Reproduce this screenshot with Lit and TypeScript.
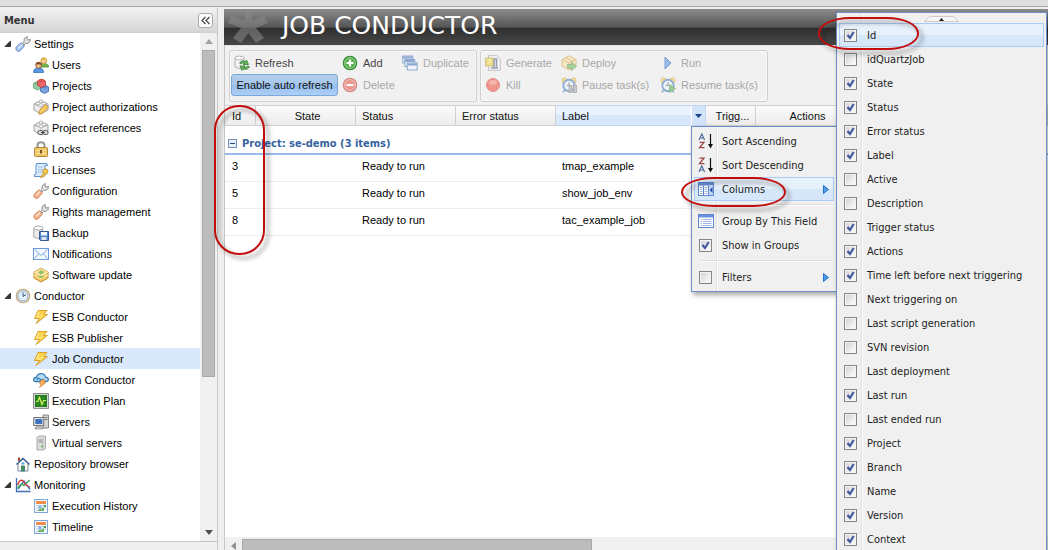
import { LitElement, html, svg, css, nothing, TemplateResult } from "lit";
import { customElement, property } from "lit/decorators.js";
import { classMap } from "lit/directives/class-map.js";

const wrench = (fill: string, line: string) => svg`
  <path d="M1 13.5 Q.5 11.5 2.500 9.700 L6.300 6.700 L9.500 9.800 L6.200 13.700 Q4.500 15.900 2.500 15.300 Z" fill=${fill} stroke=${line}/>
  <path d="M3 12.500 L7 8.500" stroke="#fff" stroke-opacity=".6" stroke-width="1.500"/>
  <path d="M7.500 7.500 L9 6 Q8.500 2.500 10.500 1.300 Q11.500 .6 12.500 .8 L11.800 3 L13 4.200 L15.400 3.300 Q15.600 5.500 14 6.700 Q12.500 7.800 10.500 7.300 L9 9 Z" fill="#e3e3e3" stroke="#8b8b8b"/>`;

const brick = (x: number, y: number, c: string, d: string) => svg`
  <path d="M${x} ${y + 2} l4 -2 4 2 v4.500 l-4 2 -4 -2 z" fill=${c} stroke=${d} stroke-width=".8"/>
  <ellipse cx=${x + 2.6} cy=${y + 1.600} rx="1.400" ry="1" fill=${c} stroke=${d} stroke-width=".6"/>
  <ellipse cx=${x + 5.4} cy=${y + 1.600} rx="1.400" ry="1" fill=${c} stroke=${d} stroke-width=".6"/>`;

const greyBrick = svg`
  <path d="M1 5 L8 2 L15 5 V11 L8 15 L1 11 Z" fill="#ededed" stroke="#999" stroke-width=".9"/>
  <path d="M1 5 L8 8 L15 5 M8 8 V15" fill="none" stroke="#b5b5b5" stroke-width=".9"/>
  <ellipse cx="5" cy="4.500" rx="2" ry="1.500" fill="#fff" stroke="#999" stroke-width=".8"/>
  <ellipse cx="11" cy="4.500" rx="2" ry="1.500" fill="#fff" stroke="#999" stroke-width=".8"/>
  <ellipse cx="8" cy="2.500" rx="2" ry="1.400" fill="#fff" stroke="#999" stroke-width=".8"/>`;

const bolt = svg`<path d="M5 1.500 H14 L10.500 5.500 H14.500 L3 14.500 L6.500 9.500 H1.500 Z" fill="#fbd44c" stroke="#d9a02b" stroke-linejoin="round"/><path d="M5.800 2.800 L3.800 8 H8 L10 5" fill="none" stroke="#fff1a8"/>`;

const calendar = svg`
  <rect x="1.500" y="1.500" width="13" height="13" fill="#f7fbff" stroke="#7fa6d6"/>
  <rect x="3" y="3" width="10" height="3" fill="#ef8b4c"/>
  <path d="M3 7.500 H13 M3 10 H13 M3 12.500 H9 M5.500 7 V13 M8 7 V13 M10.500 7 V11" stroke="#a9c3e2" stroke-width=".8"/>
  <rect x="6" y="8" width="2" height="2" fill="#7aa7dd"/><rect x="11" y="7" width="2" height="2" fill="#47a047"/>
  <path d="M8.500 10 h2.500 v3 h-2.500 z M6 11 h2 v2 h-2z" fill="#5bb053"/>`;

const alarm = svg`
  <circle cx="3.500" cy="3.500" r="2.700" fill="#f6cf5c" stroke="#cf9d2a" stroke-width=".8"/>
  <circle cx="12.500" cy="3.500" r="2.700" fill="#f6cf5c" stroke="#cf9d2a" stroke-width=".8"/>
  <path d="M3.500 13 L2 15.500 M12 13 L14 15.500" stroke="#5b7fae" stroke-width="1.500"/>
  <circle cx="8" cy="8.500" r="5.700" fill="#eef5fd" stroke="#3f76b8" stroke-width="1.900"/>
  <path d="M8 5 V9 L5.500 8" fill="none" stroke="#456"/>`;

const sheet = svg`
  <rect x=".5" y="1.500" width="15" height="13" fill="#fff" stroke="#5f86d0"/>
  <rect x="1" y="2" width="14" height="2.500" fill="#6a93de"/>`;

const icons: Record<string, TemplateResult> = {
  settings: wrench("#a9c6f2", "#6587c9"),
  config: wrench("#f7b48c", "#d98053"),
  users: svg`
    <path d="M6 10 Q6 6.500 10.500 6.500 Q15.500 6.500 15.500 10 Z" fill="#79b84a" stroke="#4d8a2a" stroke-width=".8"/>
    <circle cx="10.800" cy="3.800" r="2.900" fill="#f6cf9a" stroke="#b98a3a" stroke-width=".8"/>
    <path d="M8 3.500 Q8 .5 11 .6 Q14 .7 13.800 3.700 Q11 1.900 8 3.500" fill="#dfb53a"/>
    <path d="M.6 15.400 Q.6 11 5.500 11 Q10.500 11 10.500 15.400 Z" fill="#5b9be6" stroke="#2c66b5" stroke-width=".8"/>
    <circle cx="5.600" cy="8.300" r="2.900" fill="#f3c08c" stroke="#7b4a22" stroke-width=".8"/>
    <path d="M2.600 8 Q2.600 5 5.700 5.100 Q8.800 5.200 8.500 8.200 Q5.500 6.500 2.600 8" fill="#8a4b22"/>`,
  projects: svg`${brick(0.5, 3.5, "#93cda3", "#5a9d6d")}${brick(7.5, 7, "#77a3dc", "#3f69a8")}${brick(4.5, 1, "#ee6666", "#c53a3a")}`,
  auth: svg`${greyBrick}<path d="M6.500 11.500 L12.500 5.500 L15.300 8.300 L9.500 14.300 L6 15.200 Z" fill="#f8cb61" stroke="#c78a2b" stroke-width=".9"/>`,
  refs: svg`${greyBrick}<rect x="5" y="10.500" width="5" height="4" rx="1.500" fill="#ddd" stroke="#555"/><rect x="10" y="10.500" width="5" height="4" rx="1.500" fill="#ddd" stroke="#555"/><path d="M8 12.500 H12" stroke="#444"/>`,
  lock: svg`<path d="M4.500 7 V4.500 Q4.500 1.200 8 1.200 Q11.500 1.200 11.500 4.500 V7" fill="none" stroke="#989898" stroke-width="2"/>
    <rect x="1.500" y="6.500" width="13" height="9" rx="1" fill="#f1c765" stroke="#b3873a"/><path d="M3 9.500 H13 M3 12.500 H13" stroke="#fae6ab"/><path d="M8 9 V12.500" stroke="#77561b" stroke-width="2"/>`,
  license: svg`<path d="M3.500 1.500 H13 Q14.500 1.500 14.500 3.500 H12 V13 Q12 14.500 10 14.500 H1.500 Q.7 12 3 12 V4 Q3 1.500 5 1.500" fill="#d8eafb" stroke="#5d92cf"/>
    <path d="M5 5 H10 M5 7.500 H10 M5 10 H9" stroke="#a4c6ea"/><circle cx="12.300" cy="9.500" r="2.600" fill="#f7cc57" stroke="#c58f2a" stroke-width=".9"/><path d="M11 11.500 L7 15.200 L9.500 15.300 L13 12" fill="#f7cc57" stroke="#c58f2a" stroke-width=".8"/>`,
  backup: svg`<path d="M.8 3 V12 Q4 14.500 9.500 13 V3" fill="#ececec" stroke="#a5a5a5"/><ellipse cx="5.500" cy="3" rx="4.700" ry="2" fill="#fff" stroke="#a5a5a5"/>
    <path d="M6.500 6.500 H15.500 V15.500 H7.500 L6.500 14.500 Z" fill="#5584cf" stroke="#33589b"/><rect x="8" y="7" width="6" height="3.500" fill="#f3f7fd"/><rect x="8.500" y="12" width="5" height="3" fill="#dfe7f5"/>`,
  mail: svg`<rect x=".5" y="2.500" width="15" height="11" fill="#f2f8ff" stroke="#6a9bd8"/><path d="M1.500 3.500 L8 9.500 L14.500 3.500 M1.500 12.500 L5.800 7.800 M14.500 12.500 L10.200 7.800" fill="none" stroke="#7fabe0"/>`,
  update: svg`<path d="M1 5 L8 1.200 L15 5 V11 L8 15 L1 11 Z" fill="#f5ca62" stroke="#bd8b2c"/><path d="M1 5 L8 8.500 L15 5 L8 1.200 Z" fill="#fae39b"/><path d="M1 5 L8 8.500 L15 5 M1 8 L8 11.500 L15 8" fill="none" stroke="#fff3c9"/><path d="M5 5.500 L8 3 L11.500 5 L8 8 Z M4 9 L8 11.500 L12 9" fill="#75b756" fill-opacity=".75"/>`,
  clock: svg`<circle cx="8" cy="8" r="6.600" fill="#e9f2fc" stroke="#c4a777" stroke-width="1.400"/><circle cx="8" cy="8" r="4.900" fill="none" stroke="#86a9d3" stroke-width=".9"/><path d="M8 4.500 V8.500 L11 6.500" fill="none" stroke="#36587f"/>`,
  bolt,
  storm: svg`<path d="M3 9.500 Q.5 9.500 .7 7.300 Q1 5.300 3.500 5.500 Q4.500 1.500 8.500 1.700 Q12 2 12.500 5.300 Q15.500 5.500 15.300 7.800 Q15 9.800 12 9.500 Z" fill="#b8dcf4" stroke="#2e78b5" stroke-width="1.300"/><path d="M4 8 Q5 5 7.500 7.500 Q9 9 10.500 7" fill="none" stroke="#2e78b5" stroke-width="1.300"/><path d="M8.500 8 H12.500 L10.500 11 H12.500 L6.500 15.500 L8.500 12 H6.500 Z" fill="#fbb25c" stroke="#dc7d2d" stroke-width=".7"/>`,
  plan: svg`<rect x=".7" y=".7" width="14.600" height="14.600" fill="#eee" stroke="#777"/><rect x="2" y="2" width="12" height="12" fill="#1c7a1c"/><path d="M5 2 V14 M8 2 V14 M11 2 V14 M2 5 H14 M2 8 H14 M2 11 H14" stroke="#3f9d2e" stroke-width=".7"/><path d="M3 9 L5 8 L6.500 4.500 L9 11.500 L10.500 7.500 H13" fill="none" stroke="#d6f05e" stroke-width="1.200"/>`,
  servers: svg`<path d="M10 1 H15.500 V14 H10 Z" fill="#d4d4d4" stroke="#888"/><path d="M11.500 3.500 H14.500 M11.500 5.500 H14.500" stroke="#777"/><rect x=".7" y="3.500" width="10" height="8" fill="#e4e4e4" stroke="#777"/><rect x="2.300" y="5" width="7" height="5" fill="#3f73bf"/><path d="M3.500 12 H8 V13.500 H10 V15 H2 V13.500 H3.500 Z" fill="#c4c4c4" stroke="#888" stroke-width=".6"/>`,
  virtual: svg`<path d="M4 2.500 L6 1 H12.500 V13.500 L10.500 15 H4 Z" fill="#dedede" stroke="#a8a8a8"/><path d="M10 3 V15" stroke="#bbb"/><path d="M5.500 5 H9.500 M5.500 7 H9.500" stroke="#888"/><circle cx="9" cy="11.500" r=".9" fill="#52a452"/>`,
  home: svg`<path d="M3 7.500 V15 H13 V7.500" fill="#fffbe8" stroke="#7389a8"/><path d="M1.500 8.500 L8 2.500 L14.500 8.500" fill="none" stroke="#34588c" stroke-width="1.500"/><path d="M4 1.500 V5" stroke="#b04a32" stroke-width="2"/><rect x="6.500" y="10" width="3" height="5" fill="#3e9b46" stroke="#285f8a" stroke-width=".7"/><rect x="6.500" y="6.500" width="3" height="2" fill="#56a6e5"/>`,
  chart: svg`<path d="M1.500 1 V14.500 H15.500" fill="none" stroke="#3e70b5" stroke-width="1.300"/><path d="M3 12 L9 4 L15 12.500" fill="none" stroke="#3d7fd2" stroke-width="1.400"/><path d="M2.500 11.500 Q6 5 9 8.500 L14.500 3" fill="none" stroke="#3fa758" stroke-width="1.400"/><path d="M2.500 8 Q5 1 8.500 4.500 Q11 9 15 10" fill="none" stroke="#d83a3a" stroke-width="1.500"/>`,
  calendar,
  refresh: svg`<path d="M1 3 V12 Q4 14.500 10 13 V3" fill="#f1f1f1" stroke="#b0b0b0"/><ellipse cx="5.500" cy="3" rx="4.500" ry="1.900" fill="#fff" stroke="#b0b0b0"/><path d="M5.500 8 Q8 4.500 11.500 6.500 L12.500 5 L14.500 9.500 H9.500 L10.500 8 Q8.500 7 7 9 Z" fill="#66b85a" stroke="#347d34" stroke-width=".8"/><path d="M15.500 12 Q13 15.500 9 14 L8 15.500 L6 11 H11 L10 12.500 Q12 13 13.500 11 Z" fill="#66b85a" stroke="#347d34" stroke-width=".8"/>`,
  add: svg`<circle cx="8" cy="8" r="6.700" fill="#56b04f" stroke="#37893a" stroke-width="1.100"/><circle cx="8" cy="8" r="5.400" fill="none" stroke="#a5d8a0" stroke-width=".8"/><path d="M8 4.500 V11.500 M4.500 8 H11.500" stroke="#fff" stroke-width="2.200"/>`,
  remove: svg`<circle cx="8" cy="8" r="6.700" fill="#e64a3c" stroke="#bd2f28" stroke-width="1.100"/><circle cx="8" cy="8" r="5.400" fill="none" stroke="#f6b0a8" stroke-width=".8"/><path d="M4.500 8 H11.500" stroke="#fff" stroke-width="2.200"/>`,
  duplicate: svg`<rect x=".7" y="1" width="10" height="7" fill="#eef5fc" stroke="#3a6db6"/><path d="M1 2.500 H10.500" stroke="#3a6db6" stroke-width="2"/><rect x="2.800" y="4.500" width="10" height="7" fill="#eef5fc" stroke="#3a6db6"/><path d="M3 6 H12.500" stroke="#3a6db6" stroke-width="2"/><rect x="5.200" y="8" width="10" height="7" fill="#eef5fc" stroke="#3a6db6"/><path d="M5.500 9.500 H15" stroke="#3a6db6" stroke-width="2"/>`,
  generate: svg`<path d="M3.500 .7 H12 L15.300 4 V15.300 H3.500 Z" fill="#fafafa" stroke="#999"/><path d="M8.500 4 H11.500 V12 M6 13 H13 M9 4 V13" stroke="#44597c" stroke-width="1.600" fill="none"/><rect x=".7" y="3" width="7.300" height="8" fill="#e8cf2d" stroke="#a38d1a" stroke-width=".8"/><path d="M3 5 H7 M3 7.500 H6" stroke="#fff6a0"/>`,
  kill: svg`<circle cx="8" cy="8" r="6.500" fill="#f0493c" stroke="#d0392f"/><ellipse cx="8" cy="5.500" rx="4" ry="2.500" fill="#ff9b8c" fill-opacity=".7"/>`,
  deploy: svg`<path d="M1 4.500 L8 .8 L15 4.500 V11 L8 15 L1 11 Z" fill="#fbe3ab" stroke="#d19a35"/><path d="M1 4.500 L8 8 L15 4.500 M8 8 V15 M4.500 2.700 L11.500 6.200" fill="none" stroke="#d19a35"/><path d="M6.500 9.500 H10.500 V7 L15.500 11.300 L10.500 15.500 V13 H6.500 Z" fill="#6cba50" stroke="#35832e" stroke-width=".8"/>`,
  run: svg`<path d="M5 2 L11 8 L5 14 Z" fill="#4a94e8" stroke="#1f5cb8"/>`,
  pause: svg`${alarm}<rect x="8" y="8.500" width="3" height="7" fill="#aaa" stroke="#666" stroke-width=".7"/><rect x="12.500" y="8.500" width="3" height="7" fill="#aaa" stroke="#666" stroke-width=".7"/>`,
  resume: svg`${alarm}<path d="M9.500 7.500 L15.500 11.500 L9.500 15.500 Z" fill="#54b04c" stroke="#2e8030" stroke-width=".8"/>`,
  asc: svg`<path d="M1 7 L3.800 .8 L6.600 7 M2 5 H5.600" fill="none" stroke="#4a679e" stroke-width="1.100"/><path d="M1.500 9.300 H6 L1.500 14.700 H6.500" fill="none" stroke="#a04444" stroke-width="1.300"/><path d="M12.500 1 V13" stroke="#111" stroke-width="1.200"/><path d="M10 11 H15 L12.500 15.500 Z" fill="#111"/>`,
  desc: svg`<path d="M1.500 1.200 H6 L1.500 6.600 H6.500" fill="none" stroke="#a04444" stroke-width="1.300"/><path d="M1 15 L3.800 8.800 L6.600 15 M2 13 H5.600" fill="none" stroke="#4a679e" stroke-width="1.100"/><path d="M12.500 1 V13" stroke="#111" stroke-width="1.200"/><path d="M10 11 H15 L12.500 15.500 Z" fill="#111"/>`,
  columns: svg`${sheet}<path d="M5.500 4.500 V14 M10.500 4.500 V14" stroke="#5f86d0"/><path d="M2 6.500 H4.500 M2 8.500 H4.500 M2 10.500 H4.500 M2 12.500 H4.500 M6.500 6.500 H9.500 M6.500 8.500 H9.500 M6.500 10.500 H9.500 M6.500 12.500 H9.500" stroke="#9db4e2"/><rect x="11" y="4.500" width="4" height="9.500" fill="#c6d8f8"/><path d="M14.500 6 V12 L11.500 9 Z" fill="#2b50a8"/>`,
  group: svg`${sheet}<path d="M2.500 6.500 H4 M5 6.500 H13.500 M2.500 8.500 H4 M5 8.500 H13.500 M2.500 10.500 H4 M5 10.500 H13.500 M2.500 12.500 H4 M5 12.500 H13.500" stroke="#9db4e2"/>`,
};

const icon = (name: string) => html`<svg class="icon" viewBox="0 0 16 16" width="16" height="16" aria-hidden="true">${icons[name]}</svg>`;

const iconStyles = css`
  .icon { display: block; flex: none; }
`;

const checkStyles = css`
  input[type="checkbox"] {
    appearance: none;
    flex: none;
    box-sizing: border-box;
    width: 13px;
    height: 13px;
    margin: 0 0 0 1px;
    border: 1px solid #858585;
    background: linear-gradient(135deg, #d3d5d8, #fbfbfb) content-box, #f4f4f4;
    padding: 1px;
  }
  input[type="checkbox"]:checked {
    background: url("data:image/svg+xml,%3Csvg xmlns='http://www.w3.org/2000/svg' viewBox='0 0 11 11'%3E%3Cpath d='M2.500 5 L5 8 L8.700 2' fill='none' stroke='%2341569b' stroke-width='2.100'/%3E%3C/svg%3E") border-box center / 11px 11px no-repeat,
      linear-gradient(135deg, #d3d5d8, #fbfbfb) content-box, #f4f4f4;
  }
`;

interface TreeNode { label: string; icon: string; root?: boolean; open?: boolean; selected?: boolean }

const tree: TreeNode[] = [
  { label: "Settings", icon: "settings", root: true, open: true },
  { label: "Users", icon: "users" },
  { label: "Projects", icon: "projects" },
  { label: "Project authorizations", icon: "auth" },
  { label: "Project references", icon: "refs" },
  { label: "Locks", icon: "lock" },
  { label: "Licenses", icon: "license" },
  { label: "Configuration", icon: "config" },
  { label: "Rights management", icon: "config" },
  { label: "Backup", icon: "backup" },
  { label: "Notifications", icon: "mail" },
  { label: "Software update", icon: "update" },
  { label: "Conductor", icon: "clock", root: true, open: true },
  { label: "ESB Conductor", icon: "bolt" },
  { label: "ESB Publisher", icon: "bolt" },
  { label: "Job Conductor", icon: "bolt", selected: true },
  { label: "Storm Conductor", icon: "storm" },
  { label: "Execution Plan", icon: "plan" },
  { label: "Servers", icon: "servers" },
  { label: "Virtual servers", icon: "virtual" },
  { label: "Repository browser", icon: "home", root: true },
  { label: "Monitoring", icon: "chart", root: true, open: true },
  { label: "Execution History", icon: "calendar" },
  { label: "Timeline", icon: "calendar" },
];

@customElement("side-menu")
export class SideMenu extends LitElement {
  static styles = [iconStyles, css`
    :host { display: flex; flex-direction: column; box-sizing: border-box; border-right: 1px solid #c9c9c9; background: #fff; }
    .head { display: flex; align-items: center; justify-content: space-between; box-sizing: border-box; height: 25px; padding: 0 4px 0 4px; background: linear-gradient(#f1f1f1, #d5d5d5); border-bottom: 1px solid #cfcfcf; }
    h2 { margin: 0; font: bold 11px "DejaVu Sans Condensed", "DejaVu Sans", sans-serif; color: #333; }
    .fold { display: grid; place-items: center; box-sizing: border-box; width: 15px; height: 15px; padding: 0; border: 1px solid #aaa; border-radius: 3px; background: #fbfbfb; }
    .body { display: flex; flex: 1; min-height: 0; }
    ul { flex: 1; min-width: 0; margin: 0; padding: 0; list-style: none; overflow: hidden; }
    a { display: flex; align-items: center; gap: 3px; height: 21px; padding-left: 33px; color: #000; text-decoration: none; white-space: nowrap; }
    a.root { padding-left: 4px; }
    a.selected { background: #d9e8fb; }
    .twist { flex: none; width: 8px; height: 8px; }
    .bar { display: flex; flex-direction: column; flex: none; width: 17px; background: #f0f0f0; }
    .arrow { display: grid; place-items: center; height: 17px; }
    .track { flex: 1; padding: 0 2px 0 2px; }
    .thumb { box-sizing: border-box; height: 69%; background: #bcbcbc; border: 1px solid #a8a8a8; }
    .foot { height: 8px; border-top: 1px solid #c4c4c4; background: #efefef; }
  `];

  render() {
    return html`
      <div class="head">
        <h2>Menu</h2>
        <button class="fold" aria-label="Collapse menu">
          <svg width="9" height="9" viewBox="0 0 9 9"><path d="M4.500 1 L1 4.500 L4.500 8 M8.500 1 L5 4.500 L8.500 8" fill="none" stroke="#444" stroke-width="1.200"/></svg>
        </button>
      </div>
      <div class="body">
        <ul>
          ${tree.map((n) => html`<li><a href="#" class=${classMap({ root: !!n.root, selected: !!n.selected })}>
            ${n.root ? html`<svg class="twist" viewBox="0 0 8 8">${n.open ? svg`<path d="M6.500 1 V6.500 H1 Z" fill="#333" stroke="#222" stroke-width=".8"/>` : nothing}</svg>` : nothing}
            ${icon(n.icon)}<span>${n.label}</span></a></li>`)}
        </ul>
        <div class="bar">
          <div class="arrow"><svg width="8" height="5"><path d="M0 5 L4 0 L8 5 Z" fill="#a0a0a0"/></svg></div>
          <div class="track"><div class="thumb"></div></div>
          <div class="arrow"><svg width="8" height="5"><path d="M0 0 L4 5 L8 0 Z" fill="#505050"/></svg></div>
        </div>
      </div>
      <div class="foot"></div>`;
  }
}

@customElement("tool-bar")
export class ToolBar extends LitElement {
  static styles = [iconStyles, css`
    :host { display: flex; gap: 3px; padding: 4px 4px 3px; background: #f1f1f1; border-top: 1px solid #e2e2e2; }
    .group { display: grid; grid-auto-rows: 22px; padding: 1px 1px 5px; border: 1px solid #cfcfcf; border-radius: 3px; background: #f1f1f1; box-shadow: inset 0 0 0 1px #f8f8f8; }
    .edit { grid-template-columns: 108px 60px 76px; }
    .exec { grid-template-columns: 76px 99px 109px; }
    button { display: flex; align-items: center; justify-self: start; gap: 5px; padding: 0 3px; border: 0; background: none; font: inherit; color: #444; white-space: nowrap; }
    button:disabled { color: #a8a8a8; }
    button:disabled .icon { opacity: .55; }
    .pressed { justify-content: center; box-sizing: border-box; width: 107px; padding: 0; color: #111; border: 1px solid #7ba7d9; border-radius: 3px; background: linear-gradient(#b4cfec, #a5c6eb 50%, #93bdee 51%, #aed0f6); }
  `];

  tool(label: string, name: string, disabled = true) {
    return html`<button ?disabled=${disabled}>${icon(name)}<span>${label}</span></button>`;
  }

  render() {
    return html`
      <div class="group edit">
        ${this.tool("Refresh", "refresh", false)}${this.tool("Add", "add", false)}${this.tool("Duplicate", "duplicate")}
        <button class="pressed" aria-pressed="true">Enable auto refresh</button>${this.tool("Delete", "remove")}
      </div>
      <div class="group exec">
        ${this.tool("Generate", "generate")}${this.tool("Deploy", "deploy")}${this.tool("Run", "run")}
        ${this.tool("Kill", "kill")}${this.tool("Pause task(s)", "pause")}${this.tool("Resume task(s)", "resume")}
      </div>`;
  }
}

@customElement("job-grid")
export class JobGrid extends LitElement {
  static styles = css`
    :host { display: flex; flex-direction: column; flex: 1; min-height: 0; background: #fff; }
    .view { flex: 1; min-height: 0; overflow: hidden; }
    table { width: 100%; border-collapse: separate; border-spacing: 0; table-layout: fixed; }
    .c-id { width: 31px; } .c-wide { width: 100px; } .c-label { width: 150px; } .c-trig { width: 50px; }
    th { box-sizing: border-box; height: 21px; padding: 0 0 0 6px; font-weight: normal; text-align: left; white-space: nowrap; overflow: hidden; background: linear-gradient(#fbfbfb, #ececec); border: solid #d0d0d0; border-width: 1px 1px 1px 0; color: #111; }
    th.first { padding-left: 7px; }
    th.mid { text-align: center; padding: 0 0 0 4px; }
    th.hot { padding: 0 0 0 6px; background: linear-gradient(#eaf3fd 45%, #d8e8fa 50%); border-color: #c2d8f2; }
    .cell { display: flex; align-items: center; justify-content: space-between; height: 19px; }
    .drop { display: grid; place-items: center; width: 14px; height: 19px; padding: 0; border: 0; border-left: 1px solid #fff; background: #d3e4fa; }
    td { box-sizing: border-box; height: 27px; padding: 0 6px 4px; border-bottom: 1px solid #ededed; color: #000; white-space: nowrap; }
    td.first { padding-left: 7px; }
    .group td { height: 29px; padding: 7px 3px 0; border-bottom: 2px solid #99bbe8; font: bold 11px "DejaVu Sans Condensed", "DejaVu Sans", sans-serif; color: #3764a0; }
    .title { display: flex; align-items: center; gap: 5px; }
    .title button { display: block; padding: 0; border: 0; background: none; height: 9px; }
    .title svg, .drop svg { display: block; }
    .hbar { display: flex; height: 13px; background: #f0f0f0; }
    .arrow { display: grid; place-items: center; width: 17px; height: 17px; }
    .track { flex: 1; padding-top: 2px; }
    .thumb { box-sizing: border-box; width: 350px; height: 12px; background: #bcbcbc; border: 1px solid #a8a8a8; }
  `;

  render() {
    const rows = [["3", "tmap_example"], ["5", "show_job_env"], ["8", "tac_example_job"]];
    return html`
      <div class="view"><table>
        <colgroup><col class="c-id"><col class="c-wide"><col class="c-wide"><col class="c-wide"><col class="c-label"><col class="c-trig"><col class="c-wide"><col></colgroup>
        <thead><tr>
          <th scope="col" class="first">Id</th><th scope="col" class="mid">State</th><th scope="col">Status</th><th scope="col">Error status</th>
          <th scope="col" class="hot"><div class="cell">Label<button class="drop" aria-label="Column menu"><svg width="7" height="4"><path d="M0 0 H7 L3.500 4 Z" fill="#15428b"/></svg></button></div></th>
          <th scope="col" class="mid">Trigg...</th><th scope="col" class="mid">Actions</th><th></th>
        </tr></thead>
        <tbody>
          <tr class="group"><td colspan="8"><div class="title">
            <button aria-label="Collapse group"><svg width="9" height="9"><rect x=".5" y=".5" width="8" height="8" fill="#eaf1fa" stroke="#6f8fbd"/><path d="M2 4.500 H7" stroke="#24477d"/></svg></button>Project: se-demo (3 items)
          </div></td></tr>
          ${rows.map((r) => html`<tr><td class="first">${r[0]}</td><td></td><td>Ready to run</td><td></td><td>${r[1]}</td><td></td><td></td><td></td></tr>`)}
        </tbody>
      </table></div>
      <div class="hbar">
        <div class="arrow"><svg width="5" height="8"><path d="M5 0 L0 4 L5 8 Z" fill="#909090"/></svg></div>
        <div class="track"><div class="thumb"></div></div>
      </div>`;
  }
}

const menuStyles = css`
  :host { display: block; box-sizing: border-box; padding: 2px; font: 11px/14px "DejaVu Sans Condensed", "DejaVu Sans", sans-serif; color: #222; border: 1px solid #6c8fc9; background: linear-gradient(90deg, transparent 24px, #e0e0e0 24px, #e0e0e0 25px, #fff 25px, #fff 26px, transparent 26px) #f0f0f0; box-shadow: 2px 3px 5px rgba(0, 0, 0, .35); overflow: hidden; }
  .item { display: flex; align-items: center; box-sizing: border-box; width: 100%; height: 24px; padding: 0 4px 0 3px; border: 1px solid transparent; background: none; font: inherit; color: inherit; text-align: left; white-space: nowrap; }
  .active { border-color: #a9cbf5; background: linear-gradient(#e7f1fc 48%, #d7e7fa 52%); }
  .mark { display: grid; align-items: center; justify-items: start; flex: none; width: 16px; margin-right: 8px; }
  .text { flex: 1; padding-top: 2px; }
`;

@customElement("header-menu")
export class HeaderMenu extends LitElement {
  static styles = [iconStyles, checkStyles, menuStyles, css`
    hr { height: 1px; margin: 3px 3px 3px 6px; border: 0; border-bottom: 1px solid #fff; background: #dcdcdc; box-sizing: content-box; }
  `];

  arrow = html`<svg width="6" height="9"><path d="M.5 .5 L5.500 4.500 L.5 8.500 Z" fill="#4a9be8" stroke="#2470c4"/></svg>`;

  render() {
    return html`
      <button class="item"><span class="mark">${icon("asc")}</span><span class="text">Sort Ascending</span></button>
      <button class="item"><span class="mark">${icon("desc")}</span><span class="text">Sort Descending</span></button>
      <button class="item active"><span class="mark">${icon("columns")}</span><span class="text">Columns</span>${this.arrow}</button>
      <hr>
      <button class="item"><span class="mark">${icon("group")}</span><span class="text">Group By This Field</span></button>
      <label class="item"><span class="mark"><input type="checkbox" checked></span><span class="text">Show in Groups</span></label>
      <hr>
      <label class="item"><span class="mark"><input type="checkbox"></span><span class="text">Filters</span>${this.arrow}</label>`;
  }
}

const columns: [string, boolean][] = [
  ["Id", true], ["idQuartzJob", false], ["State", true], ["Status", true], ["Error status", true], ["Label", true],
  ["Active", false], ["Description", false], ["Trigger status", true], ["Actions", true], ["Time left before next triggering", true],
  ["Next triggering on", false], ["Last script generation", false], ["SVN revision", false], ["Last deployment", false],
  ["Last run", true], ["Last ended run", false], ["Project", true], ["Branch", true], ["Name", true], ["Version", true], ["Context", true],
];

@customElement("column-menu")
export class ColumnMenu extends LitElement {
  static styles = [checkStyles, menuStyles, css`
    .up { display: block; width: 35px; height: 8px; margin: 0 auto; padding: 0; border: 0; background: none; }
    .up svg { display: block; }
  `];

  render() {
    return html`
      <button class="up" aria-label="Scroll up"><svg width="35" height="6"><path d="M.5 5.500 L5.500 .5 H29.500 L34.500 5.500 Z" fill="#f6f6f6" stroke="#ccc"/><path d="M15 5 L17.500 2 L20 5 Z" fill="#222"/></svg></button>
      ${columns.map(([name, on], i) => html`<label class=${classMap({ item: true, active: i === 0 })}><span class="mark"><input type="checkbox" ?checked=${on}></span><span class="text">${name}</span></label>`)}`;
  }
}

@customElement("app-root")
export class AppRoot extends LitElement {
  @property() heading = "JOB CONDUCTOR";

  static styles = css`
    :host { display: flex; flex-direction: column; position: relative; height: 100vh; overflow: hidden; background: #efefef; font: 11px/14px "Liberation Sans", Arial, sans-serif; color: #000; }
    .top { flex: none; height: 6px; background: #e0e0e0; border-bottom: 1px solid #a8a8a8; }
    .work { display: flex; flex: 1; min-height: 0; gap: 6px; padding-top: 1px; }
    side-menu { flex: none; width: 218px; }
    main { display: flex; flex-direction: column; flex: 1; min-width: 0; }
    .banner { display: flex; align-items: center; gap: 13px; height: 36px; margin-top: 1px; padding-left: 4px; overflow: hidden; background: linear-gradient(#8c8c8c, #555 50%, #2f2f2f 54%, #484848); }
    .banner svg { flex: none; }
    h1 { margin: 0; padding-bottom: 2px; font: 25px/30px "DejaVu Sans", sans-serif; color: #fff; white-space: nowrap; }
    .content { display: flex; flex-direction: column; flex: 1; min-height: 0; border-left: 1px solid #c6c6c6; }
    header-menu { position: absolute; left: 691px; top: 126px; width: 146px; }
    column-menu { position: absolute; left: 836px; top: 12px; bottom: -4px; width: 211px; }
    .ring { position: absolute; box-sizing: border-box; border: 2px solid #c20d0d; filter: drop-shadow(4px 4px 2px rgba(0, 0, 0, .4)); pointer-events: none; }
    .ring-id { left: 214px; top: 105px; width: 51px; height: 150px; border-radius: 25px; }
    .ring-columns { left: 681px; top: 177px; width: 105px; height: 30px; border-radius: 32px / 15px; }
    .ring-entry { left: 818px; top: 17px; width: 101px; height: 33px; border-radius: 32px / 16px; }
  `;

  render() {
    return html`
      <div class="top"></div>
      <div class="work">
        <side-menu></side-menu>
        <main>
          <div class="banner">
            <svg width="41" height="36" viewBox="0 0 41 36"><path d="M17 0 H25 L24 11 L36 7 L40 14 L28 19 L36 29 L28 34 L20.500 24 L13 34 L5 29 L13 19 L0 14 L3 7 L17 11 Z" fill="#8a8a8a" fill-opacity=".55"/></svg>
            <h1>${this.heading}</h1>
          </div>
          <div class="content">
            <tool-bar></tool-bar>
            <job-grid></job-grid>
          </div>
        </main>
      </div>
      <header-menu></header-menu>
      <column-menu></column-menu>
      <div class="ring ring-id"></div>
      <div class="ring ring-columns"></div>
      <div class="ring ring-entry"></div>`;
  }
}
